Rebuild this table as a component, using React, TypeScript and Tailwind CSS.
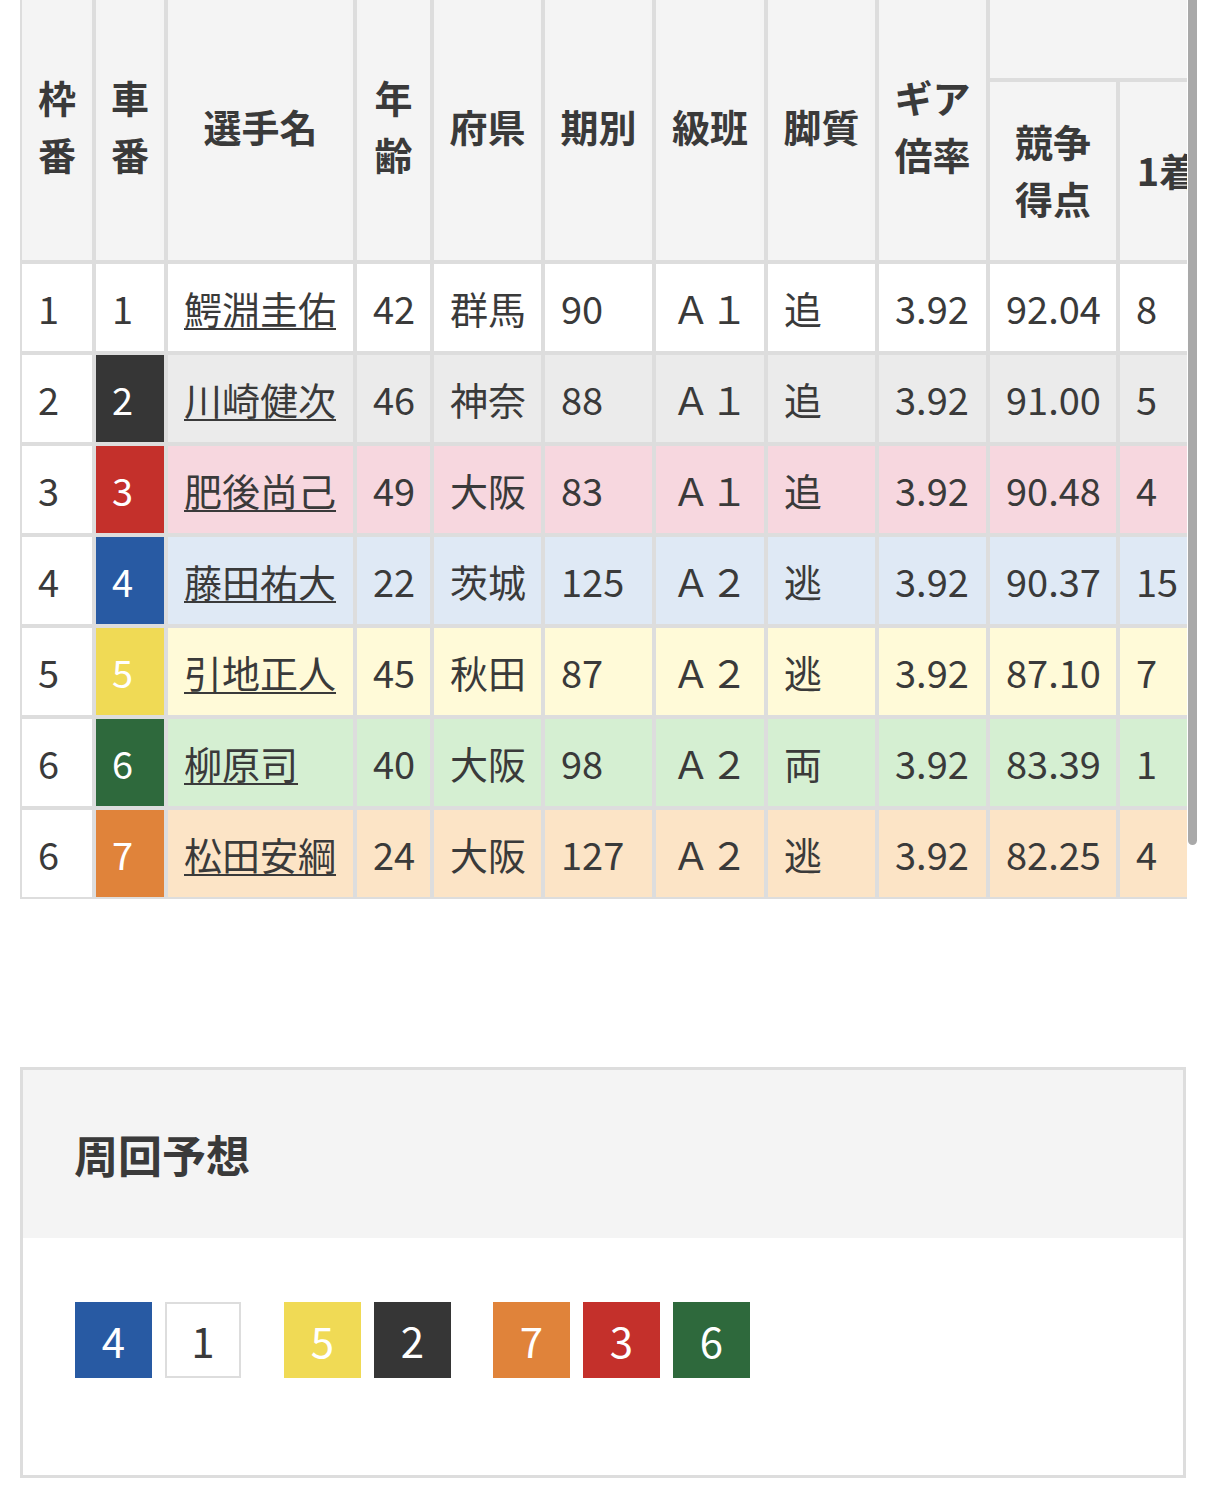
import React from "react";

type Row = {
  waku: number;
  car: number;
  name: string;
  age: number;
  pref: string;
  ki: number;
  cls: string;
  leg: string;
  gear: string;
  score: string;
  first: number;
  bg: string;
  carCls: string;
};

const rows: Row[] = [
  { waku: 1, car: 1, name: "鰐淵圭佑", age: 42, pref: "群馬", ki: 90, cls: "Ａ１", leg: "追", gear: "3.92", score: "92.04", first: 8, bg: "bg-white", carCls: "bg-white text-[#3a3a3a]" },
  { waku: 2, car: 2, name: "川崎健次", age: 46, pref: "神奈", ki: 88, cls: "Ａ１", leg: "追", gear: "3.92", score: "91.00", first: 5, bg: "bg-[#ebebeb]", carCls: "bg-[#363636] text-white" },
  { waku: 3, car: 3, name: "肥後尚己", age: 49, pref: "大阪", ki: 83, cls: "Ａ１", leg: "追", gear: "3.92", score: "90.48", first: 4, bg: "bg-[#f7d7df]", carCls: "bg-[#c4302b] text-white" },
  { waku: 4, car: 4, name: "藤田祐大", age: 22, pref: "茨城", ki: 125, cls: "Ａ２", leg: "逃", gear: "3.92", score: "90.37", first: 15, bg: "bg-[#dfe9f5]", carCls: "bg-[#285aa3] text-white" },
  { waku: 5, car: 5, name: "引地正人", age: 45, pref: "秋田", ki: 87, cls: "Ａ２", leg: "逃", gear: "3.92", score: "87.10", first: 7, bg: "bg-[#fffad8]", carCls: "bg-[#f0da55] text-white" },
  { waku: 6, car: 6, name: "柳原司", age: 40, pref: "大阪", ki: 98, cls: "Ａ２", leg: "両", gear: "3.92", score: "83.39", first: 1, bg: "bg-[#d5efd2]", carCls: "bg-[#2e693c] text-white" },
  { waku: 6, car: 7, name: "松田安綱", age: 24, pref: "大阪", ki: 127, cls: "Ａ２", leg: "逃", gear: "3.92", score: "82.25", first: 4, bg: "bg-[#fce4c6]", carCls: "bg-[#e0833a] text-white" },
];

const th = "border-2 border-[#dddddd] bg-[#f4f4f4] font-bold text-center align-middle px-2";
const thMain = th + " pb-[10px]";
const thSub = th + " pb-[4px] whitespace-nowrap";
const td = "border-2 border-[#dddddd] pl-[16px] pr-2 align-middle text-left whitespace-nowrap";

type Box = { n: number; cls: string; gap: string };
const boxes: Box[] = [
  { n: 4, cls: "w-[77px] bg-[#285aa3] text-white", gap: "" },
  { n: 1, cls: "w-[76px] bg-white text-[#3a3a3a] border-2 border-[#dddddd]", gap: "ml-[13px]" },
  { n: 5, cls: "w-[77px] bg-[#f0da55] text-white", gap: "ml-[43px]" },
  { n: 2, cls: "w-[77px] bg-[#363636] text-white", gap: "ml-[13px]" },
  { n: 7, cls: "w-[77px] bg-[#e0833a] text-white", gap: "ml-[42px]" },
  { n: 3, cls: "w-[77px] bg-[#c4302b] text-white", gap: "ml-[13px]" },
  { n: 6, cls: "w-[77px] bg-[#2e693c] text-white", gap: "ml-[13px]" },
];

export default function App() {
  return (
    <div className="relative w-[1206px] min-h-[1485px] bg-white text-[#3a3a3a] font-['Noto_Sans_CJK_JP','Noto_Sans',sans-serif] text-[38px] leading-[1.5]">
      <div className="ml-[20px] w-[1167px] overflow-hidden">
        <table className="-mt-[2px] w-[1490px] table-fixed border-separate border-spacing-0">
          <colgroup>
            <col className="w-[74px]" />
            <col className="w-[72px]" />
            <col className="w-[189px]" />
            <col className="w-[77px]" />
            <col className="w-[111px]" />
            <col className="w-[111px]" />
            <col className="w-[112px]" />
            <col className="w-[111px]" />
            <col className="w-[111px]" />
            <col className="w-[130px]" />
            <col className="w-[98px]" />
            <col className="w-[98px]" />
            <col className="w-[98px]" />
            <col className="w-[98px]" />
          </colgroup>
          <thead>
            <tr className="h-[82px]">
              <th rowSpan={2} className={thMain}>枠<br />番</th>
              <th rowSpan={2} className={thMain}>車<br />番</th>
              <th rowSpan={2} className={thMain}>選手名</th>
              <th rowSpan={2} className={thMain}>年<br />齢</th>
              <th rowSpan={2} className={thMain}>府県</th>
              <th rowSpan={2} className={thMain}>期別</th>
              <th rowSpan={2} className={thMain}>級班</th>
              <th rowSpan={2} className={thMain}>脚質</th>
              <th rowSpan={2} className={thMain}>ギア<br />倍率</th>
              <th colSpan={5} className={th}></th>
            </tr>
            <tr className="h-[182px]">
              <th className={thSub}>競争<br />得点</th>
              <th className={thSub}>1着</th>
              <th className={thSub}>2着</th>
              <th className={thSub}>3着</th>
              <th className={thSub}>着外</th>
            </tr>
          </thead>
          <tbody>
            {rows.map((r, i) => (
              <tr key={i} className="h-[91px]">
                <td className={td + " bg-white"}>{r.waku}</td>
                <td className={td + " " + r.carCls}>{r.car}</td>
                <td className={td + " " + r.bg}>
                  <span className="underline decoration-2 underline-offset-[4px]">{r.name}</span>
                </td>
                <td className={td + " " + r.bg}>{r.age}</td>
                <td className={td + " " + r.bg}>{r.pref}</td>
                <td className={td + " " + r.bg}>{r.ki}</td>
                <td className={td + " " + r.bg}>{r.cls}</td>
                <td className={td + " " + r.bg}>{r.leg}</td>
                <td className={td + " " + r.bg}>{r.gear}</td>
                <td className={td + " " + r.bg}>{r.score}</td>
                <td className={td + " " + r.bg}>{r.first}</td>
                <td className={td + " " + r.bg}>2</td>
                <td className={td + " " + r.bg}>3</td>
                <td className={td + " " + r.bg}>10</td>
              </tr>
            ))}
          </tbody>
        </table>
      </div>

      <div className="absolute left-[1188px] top-0 w-[9px] h-[845px] rounded-b-full bg-[#a9a9a9]" />

      <section className="mx-[20px] mt-[168px] border-[3px] border-[#dddddd]">
        <div className="h-[168px] bg-[#f4f4f4] flex items-center pl-[51px]">
          <h2 className="text-[44px] font-bold leading-none">周回予想</h2>
        </div>
        <div className="pl-[52px] pt-[64px] pb-[97px] flex">
          {boxes.map((b, i) => (
            <div
              key={i}
              className={"h-[76px] flex items-center justify-center text-[42px] leading-none " + b.cls + " " + b.gap}
            >
              {b.n}
            </div>
          ))}
        </div>
      </section>
    </div>
  );
}
